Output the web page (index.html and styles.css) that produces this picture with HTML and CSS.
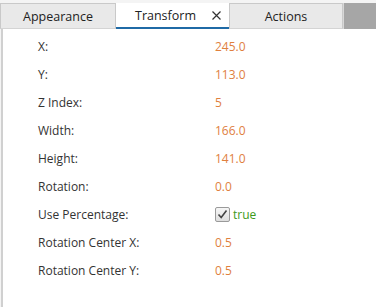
FILE: index.html
```html
<!DOCTYPE html>
<html lang="en">
<head>
  <meta charset="UTF-8" />
  <title>Properties</title>
  <link rel="stylesheet" href="styles.css">
</head>
<body>
  <div class="panel">
    <!-- Tab strip -->
    <div class="tabs">
      <div class="tab">Appearance</div>
      <div class="tab active">
        <span>Transform</span>
        <svg class="close" width="9" height="9" viewBox="0 0 9 9"><path d="M0.5 0.5 L8.5 8.5 M8.5 0.5 L0.5 8.5" stroke="#333" stroke-width="1.2"/></svg>
      </div>
      <div class="tab">Actions</div>
      <div class="tab-fill"></div>
    </div>

    <div class="props">
      <div class="row"><span class="label">X:</span><span class="value">245.0</span></div>
      <div class="row"><span class="label">Y:</span><span class="value">113.0</span></div>
      <div class="row"><span class="label">Z Index:</span><span class="value">5</span></div>
      <div class="row"><span class="label">Width:</span><span class="value">166.0</span></div>
      <div class="row"><span class="label">Height:</span><span class="value">141.0</span></div>
      <div class="row"><span class="label">Rotation:</span><span class="value">0.0</span></div>
      <div class="row">
        <span class="label">Use Percentage:</span>
        <span class="value check">
          <span class="box">
            <svg width="13" height="13" viewBox="0 0 13 13"><path d="M2.5 6.5 L5.2 9.5 L10.5 2.5" fill="none" stroke="#444" stroke-width="1.6"/></svg>
          </span>
          <span class="bool">true</span>
        </span>
      </div>
      <div class="row"><span class="label">Rotation Center X:</span><span class="value">0.5</span></div>
      <div class="row"><span class="label">Rotation Center Y:</span><span class="value">0.5</span></div>
    </div>
  </div>
</body>
</html>
```

FILE: styles.css
```css
* {
  margin: 0;
  padding: 0;
  box-sizing: border-box;
}

body {
  font-family: "Open Sans", "Noto Sans", sans-serif;
  font-size: 12px;
  color: #333;
  background: #fff;
  width: 376px;
  height: 307px;
  overflow: hidden;
}

.panel {
  height: 307px;
  display: flex;
  flex-direction: column;
  background: #f4f4f4;
}

.tabs {
  display: flex;
  height: 29px;
  padding-top: 3px;
  background: #f4f4f4;
}

.tab {
  width: 114px;
  display: flex;
  align-items: center;
  justify-content: center;
  background: #e9e9e9;
  border: 1px solid #c9c9c9;
  border-bottom: 1px solid #d4d4d4;
  color: #222;
  font-size: 12.5px;
}

.tab:first-child {
  width: 116px;
}

.tab.active {
  background: #fff;
  border: none;
  border-bottom: 2px solid #1f6aa6;
  width: 113px;
  justify-content: flex-start;
  padding-left: 19px;
  gap: 16px;
}

.close {
  margin-top: 1px;
}

.tab-fill {
  flex: 1;
  background: #a6a6a6;
  border-left: 1px solid #d8d8d8;
}

.props {
  flex: 1;
  background: #fff;
  border-left: 2px solid #d0d0d0;
  margin-left: 1px;
  padding-top: 3px;
}

.row {
  display: flex;
  align-items: center;
  height: 28px;
}

.label {
  width: 212px;
  padding-left: 35px;
}

.value {
  color: #e0803e;
}

.check {
  display: flex;
  align-items: center;
  gap: 3px;
}

.box {
  width: 15px;
  height: 15px;
  border: 1px solid #9a9a9a;
  border-radius: 2px;
  background: linear-gradient(#f6f6f6, #dedede);
  display: flex;
  align-items: center;
  justify-content: center;
}

.bool {
  color: #3d9a1a;
}
```
